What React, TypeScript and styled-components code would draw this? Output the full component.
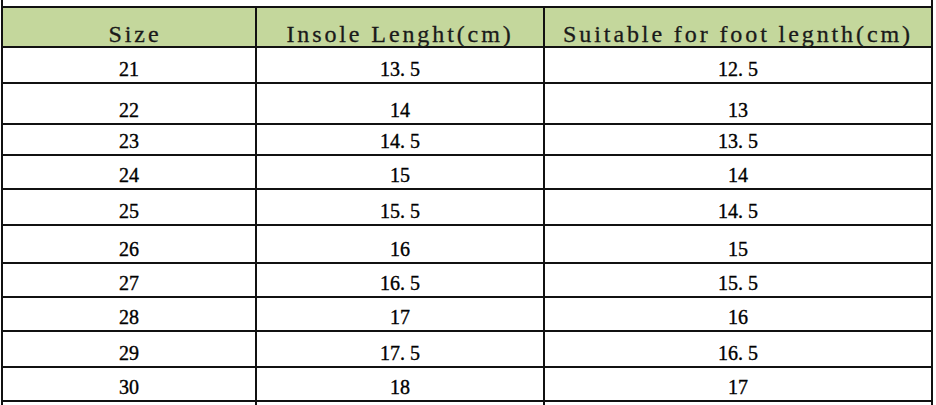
import React from 'react';
import styled, { createGlobalStyle } from 'styled-components';

const GlobalStyle = createGlobalStyle`
  html, body {
    margin: 0;
    padding: 0;
    background: #ffffff;
  }
`;

const Page = styled.div`
  width: 936px;
  height: 405px;
  overflow: hidden;
  background: #fff;
  padding-left: 1px;
  box-sizing: border-box;
`;

const Table = styled.table`
  border-collapse: collapse;
  table-layout: fixed;
  width: 930px;
  margin-top: -2px;
`;

const Row = styled.tr<{ $h: number }>`
  height: ${(p) => p.$h}px;
`;

const Cell = styled.td`
  border: 2px solid #111;
  padding: 0 0 3px;
  text-align: center;
  vertical-align: bottom;
  font-family: 'Liberation Serif', 'Times New Roman', serif;
  font-size: 20px;
  line-height: 1;
  color: #000;
  -webkit-text-stroke: 0.35px #000;
`;

const Spacer = styled.td`
  border-left: 2px solid #111;
  border-right: 2px solid #111;
  border-bottom: 2px solid #111;
  padding: 0;
`;

const HeadCell = styled.td<{ $shift?: number }>`
  border: 2px solid #111;
  background: #c4d79c;
  padding: 0 0 0 ${(p) => p.$shift ?? 0}px;
  text-align: center;
  vertical-align: bottom;
  font-family: 'Liberation Serif', 'Times New Roman', serif;
  font-size: 24px;
  letter-spacing: 2.9px;
  line-height: 24px;
  color: #1a1a1a;
  -webkit-text-stroke: 0.3px #1a1a1a;
  white-space: nowrap;
`;

const Dot = styled.span`
  margin-right: 5px;
`;

const Num = ({ v }: { v: string }) => {
  const [a, b] = v.split('.');
  if (b === undefined) return <>{a}</>;
  return (
    <>
      {a}
      <Dot>.</Dot>
      {b}
    </>
  );
};

const rows: [string, string, string, number][] = [
  ['21', '13.5', '12.5', 36],
  ['22', '14', '13', 41],
  ['23', '14.5', '13.5', 31],
  ['24', '15', '14', 34],
  ['25', '15.5', '14.5', 36],
  ['26', '16', '15', 38],
  ['27', '16.5', '15.5', 34],
  ['28', '17', '16', 34],
  ['29', '17.5', '16.5', 36],
  ['30', '18', '17', 34],
];

export default function App() {
  return (
    <>
      <GlobalStyle />
      <Page>
        <Table>
          <colgroup>
            <col style={{ width: 254 }} />
            <col style={{ width: 288 }} />
            <col style={{ width: 388 }} />
          </colgroup>
          <tbody>
            <Row $h={9}>
              <Spacer colSpan={3} />
            </Row>
            <Row $h={40}>
              <HeadCell $shift={12}>Size</HeadCell>
              <HeadCell>Insole Lenght(cm)</HeadCell>
              <HeadCell>Suitable for foot legnth(cm)</HeadCell>
            </Row>
            {rows.map(([size, insole, foot, h]) => (
              <Row key={size} $h={h}>
                <Cell>{size}</Cell>
                <Cell>
                  <Num v={insole} />
                </Cell>
                <Cell>
                  <Num v={foot} />
                </Cell>
              </Row>
            ))}
            <Row $h={30}>
              <Cell />
              <Cell />
              <Cell />
            </Row>
          </tbody>
        </Table>
      </Page>
    </>
  );
}
